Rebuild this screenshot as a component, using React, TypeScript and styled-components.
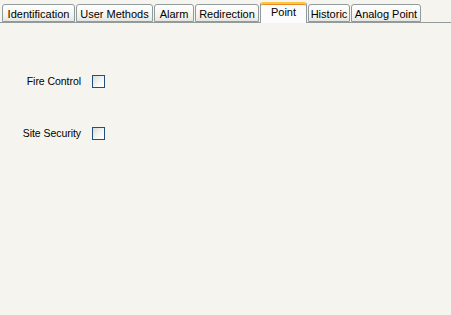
import styled, { createGlobalStyle } from 'styled-components';

const GlobalStyle = createGlobalStyle`
  html, body {
    margin: 0;
    padding: 0;
    background: #f5f4ee;
  }
  body {
    font-family: "Liberation Sans", Arial, sans-serif;
    font-size: 11px;
    color: #000;
  }
`;

interface TabProp {
  active?: boolean;
  w: number;
}

const Page = styled.div`
  width: 451px;
  height: 315px;
  background: #f5f4ee;
  overflow: hidden;
`;

const TabStrip = styled.div`
  display: flex;
  align-items: flex-end;
  height: 22px;
  padding: 0 2px;
  border-bottom: 1px solid #919b9c;
`;

const Tab = styled.div<TabProp>`
  box-sizing: border-box;
  width: ${(p) => p.w}px;
  height: ${(p) => (p.active ? '21px' : '18px')};
  margin-bottom: ${(p) => (p.active ? '-1px' : '0')};
  margin-right: 1px;
  padding-top: ${(p) => (p.active ? '1px' : '2px')};
  position: relative;
  z-index: ${(p) => (p.active ? 1 : 0)};
  border: 1px solid #919b9c;
  border-bottom: ${(p) => (p.active ? 'none' : '1px solid #919b9c')};
  border-top: ${(p) => (p.active ? '2px solid #ffc83c' : '1px solid #919b9c')};
  border-radius: 3px 3px 0 0;
  background: ${(p) =>
    p.active ? '#fcfcfe' : 'linear-gradient(#ffffff, #f3f2ec 70%, #e6e5df)'};
  box-shadow: ${(p) => (p.active ? 'inset 0 1px 0 #e68b2c' : 'none')};
  color: #000;
  text-align: center;
  white-space: nowrap;
  line-height: 14px;
`;

const Form = styled.div`
  display: grid;
  grid-template-columns: 81px 13px;
  column-gap: 11px;
  row-gap: 38px;
  padding-top: 51px;
  align-items: center;
`;

const Label = styled.div`
  text-align: right;
  font-size: 10.5px;
  letter-spacing: -0.05px;
  line-height: 13px;
  padding-top: 1px;
`;

const Check = styled.div`
  box-sizing: border-box;
  width: 13px;
  height: 13px;
  border: 1px solid #1c5180;
  background: linear-gradient(135deg, #dcdbd5, #f7f7f4 60%, #ffffff);
`;

const tabs: [string, number][] = [
  ['Identification', 73],
  ['User Methods', 77],
  ['Alarm', 40],
  ['Redirection', 64],
  ['Point', 47],
  ['Historic', 42],
  ['Analog Point', 70],
];

export default function App() {
  return (
    <Page>
      <GlobalStyle />
      <TabStrip>
        {tabs.map(([t, w]) => (
          <Tab key={t} w={w} active={t === 'Point'}>
            {t}
          </Tab>
        ))}
      </TabStrip>
      <Form>
        <Label>Fire Control</Label>
        <Check />
        <Label>Site Security</Label>
        <Check />
      </Form>
    </Page>
  );
}
